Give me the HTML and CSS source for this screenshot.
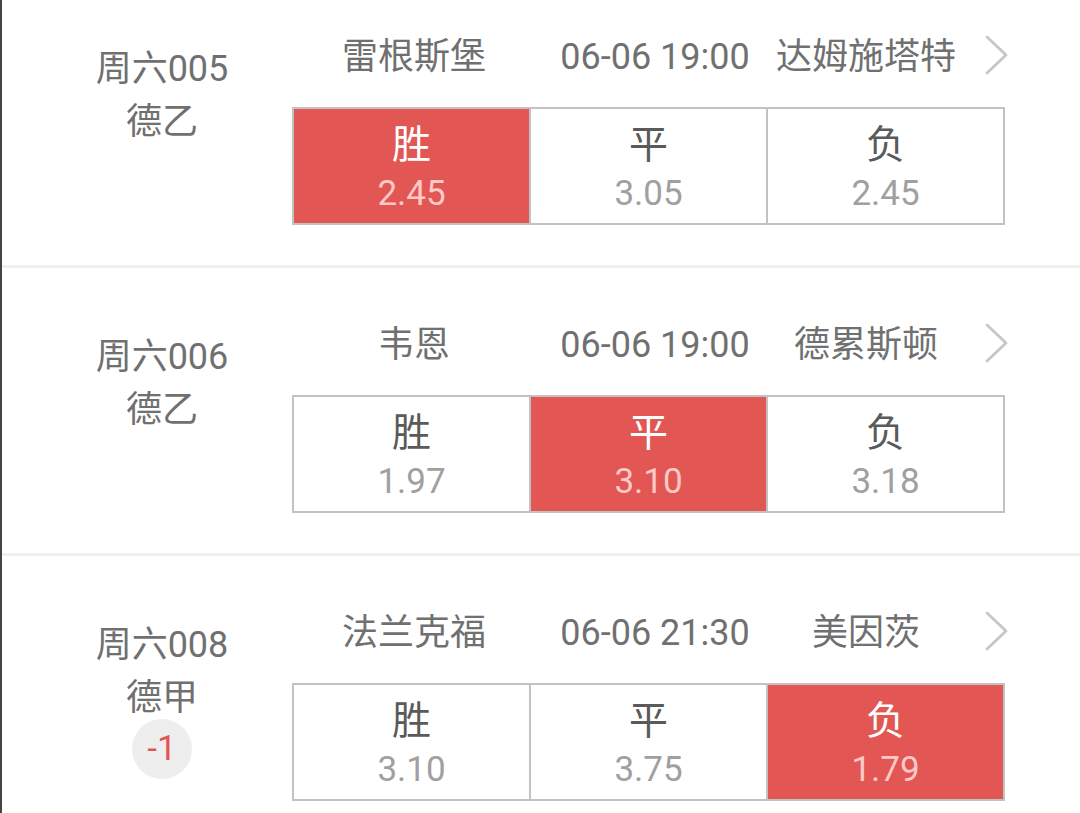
FILE: index.html
```html
<!DOCTYPE html>
<html lang="zh">
<head>
<meta charset="utf-8">
<link rel="stylesheet" href="styles.css">
</head>
<body>
<div class="page">
  <div class="list">
    <div class="match">
      <div class="info">
        <div class="line">周六005</div>
        <div class="line">德乙</div>
      </div>
      <div class="main">
        <div class="head">
          <span class="team">雷根斯堡</span>
          <span class="time">06-06 19:00</span>
          <span class="team">达姆施塔特</span>
          <svg class="chev" viewBox="0 0 26 42" width="26" height="42"><path d="M3 3 L22 21 L3 39" fill="none" stroke="#c6c6c6" stroke-width="2.8" stroke-linecap="round" stroke-linejoin="round"/></svg>
        </div>
        <div class="odds">
          <div class="cell on"><span class="lab">胜</span><span class="num">2.45</span></div>
          <div class="cell"><span class="lab">平</span><span class="num">3.05</span></div>
          <div class="cell"><span class="lab">负</span><span class="num">2.45</span></div>
        </div>
      </div>
    </div>
    <div class="match">
      <div class="info">
        <div class="line">周六006</div>
        <div class="line">德乙</div>
      </div>
      <div class="main">
        <div class="head">
          <span class="team">韦恩</span>
          <span class="time">06-06 19:00</span>
          <span class="team">德累斯顿</span>
          <svg class="chev" viewBox="0 0 26 42" width="26" height="42"><path d="M3 3 L22 21 L3 39" fill="none" stroke="#c6c6c6" stroke-width="2.8" stroke-linecap="round" stroke-linejoin="round"/></svg>
        </div>
        <div class="odds">
          <div class="cell"><span class="lab">胜</span><span class="num">1.97</span></div>
          <div class="cell on"><span class="lab">平</span><span class="num">3.10</span></div>
          <div class="cell"><span class="lab">负</span><span class="num">3.18</span></div>
        </div>
      </div>
    </div>
    <div class="match">
      <div class="info">
        <div class="line">周六008</div>
        <div class="line">德甲</div>
        <div class="badge">-1</div>
      </div>
      <div class="main">
        <div class="head">
          <span class="team">法兰克福</span>
          <span class="time">06-06 21:30</span>
          <span class="team">美因茨</span>
          <svg class="chev" viewBox="0 0 26 42" width="26" height="42"><path d="M3 3 L22 21 L3 39" fill="none" stroke="#c6c6c6" stroke-width="2.8" stroke-linecap="round" stroke-linejoin="round"/></svg>
        </div>
        <div class="odds">
          <div class="cell"><span class="lab">胜</span><span class="num">3.10</span></div>
          <div class="cell"><span class="lab">平</span><span class="num">3.75</span></div>
          <div class="cell on"><span class="lab">负</span><span class="num">1.79</span></div>
        </div>
      </div>
    </div>
  </div>
</div>
</body>
</html>
```

FILE: styles.css
```css
html, body {
  margin: 0;
  padding: 0;
  background: #ffffff;
}
body {
  width: 1080px;
  height: 813px;
  overflow: hidden;
  font-family: Roboto, "Noto Sans CJK SC", sans-serif;
  font-weight: 400;
  color: #707070;
}
.page {
  height: 813px;
  border-left: 2px solid #444444;
  overflow: hidden;
}
.list {
  margin-top: -20px;
}
.match {
  display: flex;
  height: 285px;
  border-bottom: 3px solid #f0f0f0;
}
.info {
  width: 260px;
  padding-left: 30px;
  padding-top: 63px;
  display: flex;
  flex-direction: column;
  align-items: center;
  font-size: 36px;
}
.line {
  line-height: 53px;
  white-space: nowrap;
}
.badge {
  width: 60px;
  height: 60px;
  margin-top: -6px;
  border-radius: 50%;
  background: #eeeeee;
  color: #e25654;
  font-size: 35px;
  line-height: 60px;
  text-align: center;
}
.main {
  width: 718px;
  padding-top: 52px;
}
.head {
  display: grid;
  grid-template-columns: 244px 238px 184px 1fr;
  align-items: center;
  height: 50px;
  font-size: 36px;
  line-height: 50px;
}
.team, .time {
  text-align: center;
  white-space: nowrap;
}
.chev {
  justify-self: end;
  margin-right: 0;
  margin-top: -4px;
  display: block;
}
.odds {
  margin-top: 25px;
  width: 709px;
  height: 114px;
  border: 2px solid #c2c2c2;
  background: #c2c2c2;
  display: grid;
  grid-template-columns: 1fr 1fr 1fr;
  column-gap: 2px;
}
.cell {
  background: #ffffff;
  display: flex;
  flex-direction: column;
  align-items: center;
  padding-top: 13px;
}
.lab {
  font-size: 39px;
  line-height: 46px;
  color: #5a5a5a;
}
.num {
  font-size: 35px;
  line-height: 52px;
  color: #a0a0a0;
}
.cell.on {
  background: #e25654;
}
.cell.on .lab {
  color: #ffffff;
}
.cell.on .num {
  color: #fcc9c6;
}
```
